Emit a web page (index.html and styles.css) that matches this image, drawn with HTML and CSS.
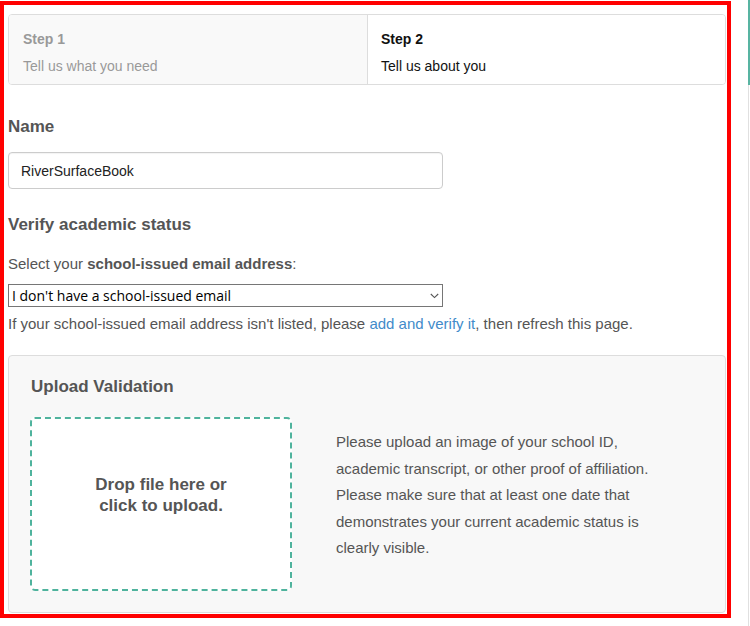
FILE: index.html
```html
<!DOCTYPE html>
<html lang="en">
<head>
<meta charset="utf-8">
<title>Tell us about you</title>
<link rel="stylesheet" href="styles.css">
</head>
<body>
<div class="page">
  <main class="frame">
    <div class="steps">
      <div class="step step-done">
        <div class="step-title">Step 1</div>
        <div class="step-desc">Tell us what you need</div>
      </div>
      <div class="step step-current">
        <div class="step-title">Step 2</div>
        <div class="step-desc">Tell us about you</div>
      </div>
    </div>

    <h2 class="section-title name-title">Name</h2>
    <input class="text-input" type="text" value="RiverSurfaceBook">

    <h2 class="section-title verify-title">Verify academic status</h2>
    <p class="select-label">Select your <strong>school-issued email address</strong>:</p>
    <div class="select-wrap">
      <select class="email-select">
        <option>I don't have a school-issued email</option>
      </select>
      <svg class="select-arrow" width="9" height="6" viewBox="0 0 9 6" aria-hidden="true">
        <path d="M0.8 1 L4.5 4.6 L8.2 1" fill="none" stroke="#555" stroke-width="1.1"/>
      </svg>
    </div>
    <p class="hint">If your school-issued email address isn't listed, please <a href="#" class="link">add and verify it</a>, then refresh this page.</p>

    <section class="upload-panel">
      <h2 class="section-title upload-title">Upload Validation</h2>
      <div class="upload-row">
        <div class="dropzone">Drop file here or<br>click to upload.</div>
        <p class="upload-desc">Please upload an image of your school ID, academic transcript, or other proof of affiliation. Please make sure that at least one date that demonstrates your current academic status is clearly visible.</p>
      </div>
    </section>
  </main>
  <div class="side">
    <div class="side-top"></div>
    <div class="side-line"></div>
  </div>
</div>
</body>
</html>
```

FILE: styles.css
```css
* { box-sizing: border-box; }

html, body {
  margin: 0;
  padding: 0;
  background: #fff;
}

body {
  font-family: "Liberation Sans", Arial, sans-serif;
  font-size: 15px;
  line-height: 20px;
  color: #555;
  overflow: hidden;
}

.page {
  display: flex;
  align-items: flex-start;
  width: 750px;
  height: 626px;
}

.frame {
  width: 731px;
  height: 617px;
  margin-top: 1px;
  border: 4px solid #ff0000;
  padding: 9px 1px 0 4px;
  overflow: hidden;
}

.side {
  margin-left: 17px;
  width: 2px;
  height: 626px;
  display: flex;
  flex-direction: column;
}

.side-top {
  height: 85px;
  background: #58b4a2;
}

.side-line {
  flex: 1;
  border-left: 1px solid #e0e0e0;
}

/* Steps */
.steps {
  display: flex;
  height: 71px;
  border: 1px solid #dddddd;
  border-radius: 4px;
  overflow: hidden;
  font-size: 14px;
}

.step {
  flex: 1;
  padding: 14px 14px 0;
}

.step + .step {
  border-left: 1px solid #dddddd;
  padding-left: 13px;
}

.step-done {
  background: #f9f9f9;
  color: #999;
}

.step-current {
  background: #fff;
  color: #111;
}

.step-title {
  font-weight: bold;
  margin-bottom: 7px;
}

/* Sections */
.section-title {
  margin: 0;
  font-size: 17px;
  line-height: 20px;
  font-weight: bold;
  color: #555;
}

.name-title { margin-top: 32px; }

.text-input {
  display: block;
  margin-top: 15px;
  width: 435px;
  height: 37px;
  padding: 0 12px;
  border: 1px solid #cccccc;
  border-radius: 4px;
  box-shadow: inset 0 1px 1px rgba(0,0,0,0.05);
  font-family: "Liberation Sans", Arial, sans-serif;
  font-size: 14px;
  color: #222;
  background: #fff;
}

.verify-title { margin-top: 26px; }

.select-label {
  margin: 19px 0 0;
}

.select-label strong { color: #555; }

.select-wrap {
  position: relative;
  margin-top: 10px;
  width: 435px;
}

.email-select {
  display: block;
  width: 435px;
  height: 23px;
  padding: 0 20px 0 3px;
  border: 1px solid #767676;
  border-radius: 0;
  background: #fff;
  color: #000;
  font-family: "Open Sans", "Noto Sans", sans-serif;
  font-size: 14px;
  -webkit-appearance: none;
  appearance: none;
}

.select-arrow {
  position: absolute;
  right: 4px;
  top: 9px;
  pointer-events: none;
}

.hint {
  margin: 7px 0 0;
}

.link {
  color: #428bca;
  text-decoration: none;
}

/* Upload panel */
.upload-panel {
  margin-top: 21px;
  height: 258px;
  border: 1px solid #dddddd;
  border-radius: 4px;
  background: #f8f8f8;
  padding: 21px 22px 0;
}

.upload-row {
  display: flex;
  align-items: flex-start;
  margin-top: 20px;
}

.dropzone {
  flex: none;
  width: 262px;
  height: 174px;
  margin-left: -1px;
  padding-top: 55px;
  border: 2px dashed #4fb39d;
  border-radius: 5px;
  background: #fff;
  text-align: center;
  font-size: 17px;
  line-height: 21px;
  font-weight: bold;
  color: #555;
}

.upload-desc {
  margin: 12px 0 0 44px;
  width: 340px;
  line-height: 26.5px;
  color: #555;
}
```
